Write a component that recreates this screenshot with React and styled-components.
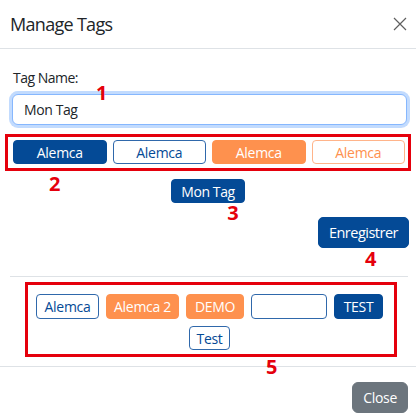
import React from "react";
import styled, { createGlobalStyle, css } from "styled-components";

const colors = {
    navy: "#044a96",
    navyLine: "#2f68ab",
    orange: "#fe914e",
    orangeLine: "#ffb48a",
    gray: "#6c757d",
    text: "#212529",
    line: "#dee2e6",
    mark: "#e5000c",
};

const GlobalStyle = createGlobalStyle`
    body {
        margin: 0;
        background: #fff;
        font-family: "Open Sans", "Noto Sans", sans-serif;
        color: ${colors.text};
    }
`;

const Modal = styled.div`
    width: 416px;
    height: 419px;
    background: #fff;
    overflow: hidden;
`;

const Header = styled.div`
    display: flex;
    align-items: center;
    justify-content: space-between;
    height: 48px;
    padding: 0 9px 0 10px;
    border-bottom: 1px solid ${colors.line};
`;

const Title = styled.h5`
    margin: 0;
    font-size: 18px;
    font-weight: 500;
    letter-spacing: -0.7px;
`;

const CloseX = styled.button`
    display: flex;
    padding: 0;
    border: none;
    background: none;
    cursor: pointer;
`;

const Label = styled.label`
    display: block;
    margin: 19px 0 0 13px;
    font-size: 14px;
    line-height: 20px;
    letter-spacing: -0.5px;
`;

const Field = styled.div`
    position: relative;
    margin: 6px 9px 0 12px;
`;

const Input = styled.input`
    box-sizing: border-box;
    width: 100%;
    height: 31px;
    padding: 0 11px;
    font: 14px "Open Sans", "Noto Sans", sans-serif;
    letter-spacing: -0.4px;
    color: ${colors.text};
    border: 1px solid #86b7fe;
    border-radius: 6px;
    outline: none;
    box-shadow: 0 0 0 3px rgba(13, 110, 253, 0.25);
`;

const Marker = styled.span`
    position: absolute;
    left: ${(p) => p.$x}px;
    top: ${(p) => p.$y}px;
    font: 700 20px "Open Sans", "Noto Sans", sans-serif;
    letter-spacing: 0;
    line-height: 1;
    color: ${colors.mark};
    pointer-events: none;
`;

const Frame = styled.div`
    position: relative;
    border: 3px solid ${colors.mark};
`;

const ColorFrame = styled(Frame)`
    display: grid;
    grid-template-columns: repeat(4, 1fr);
    gap: 6px;
    margin: 9px 5px 0 5px;
    padding: 3px 3px 4px 5px;
`;

const Tag = styled.button`
    position: relative;
    box-sizing: border-box;
    height: ${(p) => p.$h || 24}px;
    padding: 0 ${(p) => p.$px ?? 8}px;
    font: ${(p) => p.$fs || 14}px "Open Sans", "Noto Sans", sans-serif;
    letter-spacing: ${(p) => p.$ls ?? -0.3}px;
    border-radius: ${(p) => p.$r || 4}px;
    border: 1px solid;
    cursor: pointer;
    white-space: nowrap;
    ${(p) => p.$variant === "navy" && css`
        background: ${colors.navy};
        border-color: ${colors.navy};
        color: #fff;
    `}
    ${(p) => p.$variant === "navyOutline" && css`
        background: #fff;
        border-color: ${colors.navyLine};
        color: ${colors.navy};
    `}
    ${(p) => p.$variant === "orange" && css`
        background: ${colors.orange};
        border-color: ${colors.orange};
        color: #fff;
    `}
    ${(p) => p.$variant === "orangeOutline" && css`
        background: #fff;
        border-color: ${colors.orangeLine};
        color: ${colors.orange};
    `}
    ${(p) => p.$variant === "gray" && css`
        background: ${colors.gray};
        border-color: ${colors.gray};
        color: #fff;
    `}
`;

const Center = styled.div`
    display: flex;
    justify-content: center;
    margin-top: 8px;
`;

const Right = styled.div`
    display: flex;
    justify-content: flex-end;
    margin-top: 14px;
    padding-right: 7px;
`;

const Divider = styled.hr`
    margin: 28px 8px 0 10px;
    border: none;
    border-top: 1px solid ${colors.line};
`;

const TagFrame = styled(Frame)`
    display: flex;
    flex-wrap: wrap;
    justify-content: center;
    gap: 7px;
    margin: 5px 19px 0 25px;
    padding: 9px 4px 4px 1px;
`;

const Footer = styled.div`
    display: flex;
    justify-content: flex-end;
    margin-top: 9px;
    padding: 15px 8px 0;
    border-top: 1px solid ${colors.line};
`;

const tags = [
    { label: "Alemca", variant: "navyOutline", w: 63 },
    { label: "Alemca 2", variant: "orange", w: 73 },
    { label: "DEMO", variant: "orange", w: 58 },
    { label: "", variant: "navyOutline", w: 76 },
    { label: "TEST", variant: "navy", w: 49 },
    { label: "Test", variant: "navyOutline", w: 41 },
];

const App = () => (
    <Modal>
        <GlobalStyle />
        <Header>
            <Title>Manage Tags</Title>
            <CloseX aria-label="Close">
                <svg width="14" height="14" viewBox="0 0 14 14">
                    <path d="M1 1L13 13M13 1L1 13" stroke="#5f5f5f" strokeWidth="1.2" fill="none" />
                </svg>
            </CloseX>
        </Header>

        <Label htmlFor="tag-name">Tag Name:</Label>
        <Field>
            <Input id="tag-name" defaultValue="Mon Tag" />
            <Marker $x={84} $y={-11}>1</Marker>
        </Field>

        <ColorFrame>
            <Tag $variant="navy">Alemca</Tag>
            <Tag $variant="navyOutline">Alemca</Tag>
            <Tag $variant="orange">Alemca</Tag>
            <Tag $variant="orangeOutline">Alemca</Tag>
            <Marker $x={41} $y={37}>2</Marker>
        </ColorFrame>

        <Center>
            <Tag $variant="navy" $px={9} $ls={-0.4}>
                Mon Tag
                <Marker $x={55} $y={23}>3</Marker>
            </Tag>
        </Center>

        <Right>
            <Tag $variant="navy" $h={31} $fs={14.5} $px={10} $r={5} $ls={-0.5}>
                Enregistrer
                <Marker $x={46} $y={31}>4</Marker>
            </Tag>
        </Right>

        <Divider />

        <TagFrame>
            {tags.map((t, i) => (
                <Tag key={i} $variant={t.variant} $h={i === 5 ? 24 : 25} $px={0} style={{ width: t.w }}>
                    {t.label}
                </Tag>
            ))}
            <Marker $x={238} $y={72}>5</Marker>
        </TagFrame>

        <Footer>
            <Tag $variant="gray" $h={31} $px={10} $r={6}>Close</Tag>
        </Footer>
    </Modal>
);

export default App;
